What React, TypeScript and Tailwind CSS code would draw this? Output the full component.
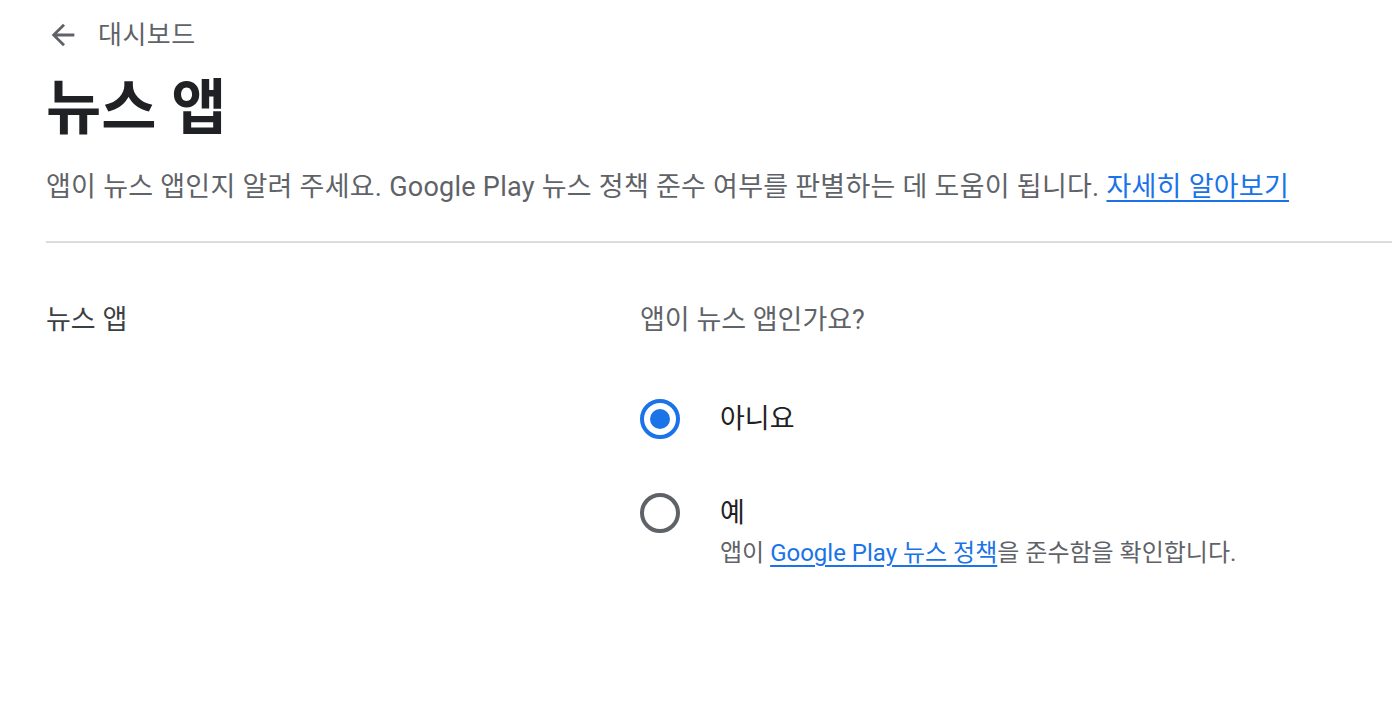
import React from "react";

const font = { fontFamily: "Roboto, 'Noto Sans CJK KR', sans-serif" };

function Radio({ checked }: { checked: boolean }) {
  return checked ? (
    <div className="w-10 h-10 rounded-full border-4 border-[#1a73e8] flex items-center justify-center shrink-0">
      <div className="w-5 h-5 rounded-full bg-[#1a73e8]" />
    </div>
  ) : (
    <div className="w-10 h-10 rounded-full border-4 border-[#5f6368] shrink-0" />
  );
}

export default function App() {
  return (
    <div className="min-h-screen bg-white pl-[46px]" style={font}>
      <div className="flex items-center gap-[18px] pt-[18px] h-[52px] text-[#5f6368]">
        <svg width="34" height="34" viewBox="0 0 24 24">
          <path d="M20 11H7.83l5.59-5.59L12 4l-8 8 8 8 1.41-1.41L7.83 13H20v-2z" fill="#5f6368" />
        </svg>
        <span className="text-[26px] tracking-[0.5px]">대시보드</span>
      </div>
      <h1 className="text-[60px] font-bold text-[#202124] leading-none mt-[27px]">뉴스 앱</h1>
      <p className="text-[27px] leading-[36px] tracking-[0.25px] text-[#5f6368] mt-[30px]">
        앱이 뉴스 앱인지 알려 주세요. Google Play 뉴스 정책 준수 여부를 판별하는 데 도움이 됩니다.{" "}
        <a className="text-[#1a73e8] underline underline-offset-4">자세히 알아보기</a>
      </p>
      <div className="border-t-2 border-[#dadce0] mt-[36px]" />
      <div className="flex pt-[59px]">
        <div className="w-[594px] text-[27px] leading-[36px] text-[#3c4043]">뉴스 앱</div>
        <div className="flex flex-col">
          <div className="text-[27px] leading-[36px] text-[#5f6368]">앱이 뉴스 앱인가요?</div>
          <div className="flex items-center gap-10 mt-[61px]">
            <Radio checked />
            <span className="text-[27px] leading-[36px] text-[#202124]">아니요</span>
          </div>
          <div className="flex gap-10 mt-[54px]">
            <Radio checked={false} />
            <div className="flex flex-col">
              <span className="text-[27px] text-[#202124] leading-[40px]">예</span>
              <span className="text-[24px] leading-[36px] text-[#5f6368] mt-[2px]">
                앱이 <a className="text-[#1a73e8] underline underline-offset-4">Google Play 뉴스 정책</a>을 준수함을 확인합니다.
              </span>
            </div>
          </div>
        </div>
      </div>
    </div>
  );
}
